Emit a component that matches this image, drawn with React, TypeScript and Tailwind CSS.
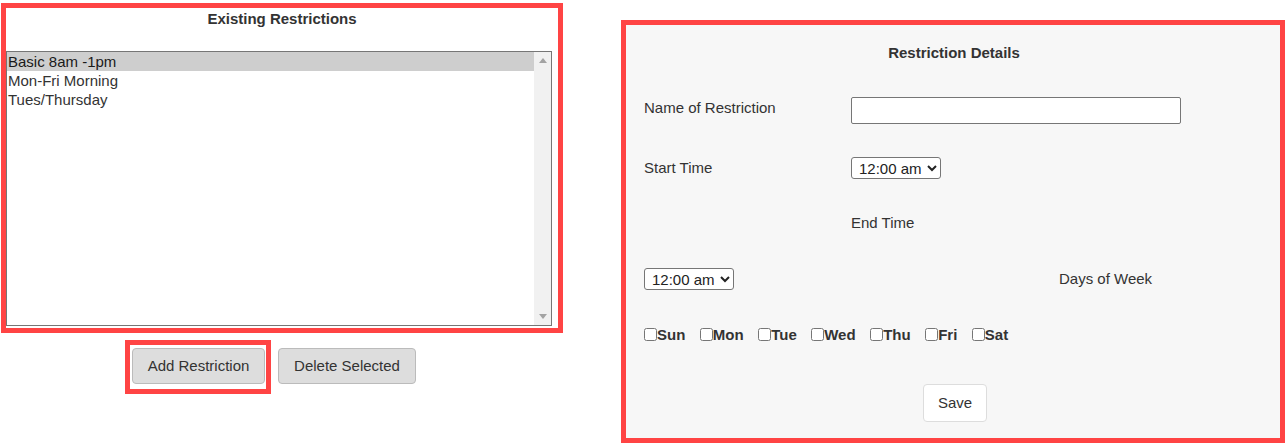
import React from "react";

// Existing restrictions shown in the list
const restrictions = [
  { id: 1, name: "Basic 8am -1pm", selected: true },
  { id: 2, name: "Mon-Fri Morning", selected: false },
  { id: 3, name: "Tues/Thursday", selected: false },
];

const days = ["Sun", "Mon", "Tue", "Wed", "Thu", "Fri", "Sat"];

const TimeSelect: React.FC = () => (
  <select
    defaultValue="12:00 am"
    className="w-[90px] h-[22px] pl-[3px] bg-white border border-[#767676] rounded-[3px] text-[15px] text-[#222]"
  >
    <option>12:00 am</option>
    <option>12:30 am</option>
    <option>1:00 am</option>
  </select>
);

const ScrollArrow: React.FC<{ down?: boolean }> = ({ down }) => (
  <div className="h-[17px] flex items-center justify-center">
    <svg width="8" height="5" viewBox="0 0 8 5">
      {down ? (
        <polygon points="0,0 8,0 4,5" fill="#a3a3a3" />
      ) : (
        <polygon points="0,5 8,5 4,0" fill="#a3a3a3" />
      )}
    </svg>
  </div>
);

const App: React.FC = () => {
  return (
    <div
      className="flex items-start pl-[1px] text-[#333] bg-white min-h-[443px]"
      style={{ fontFamily: '"Liberation Sans", Arial, sans-serif' }}
    >
      {/* Left column */}
      <div className="flex flex-col w-[562px] mt-[3px]">
        <div className="h-[330px] border-[5px] border-[#ff4444] flex flex-col">
          <h2 className="pt-[2px] text-center text-[15px] leading-[17px] font-bold text-[#333]">
            Existing Restrictions
          </h2>
          <div className="mt-[24px] w-[546px] h-[275px] border border-[#767676] flex">
            <ul className="flex-1 text-[15px] leading-[19px]">
              {restrictions.map((r) => (
                <li
                  key={r.id}
                  className={`pl-[1px] ${r.selected ? "bg-[#cecece] text-[#1a1a1a]" : "text-[#333]"}`}
                >
                  {r.name}
                </li>
              ))}
            </ul>
            <div className="w-[17px] bg-[#f1f1f1] flex flex-col justify-between">
              <ScrollArrow />
              <ScrollArrow down />
            </div>
          </div>
        </div>

        {/* Buttons */}
        <div className="flex items-start mt-[7px]">
          <div className="ml-[124px] border-[5px] border-[#ff4444] pt-[3px] pb-[5px] pl-[2px] pr-[1px]">
            <button className="w-[133px] h-[36px] bg-[#dddddd] border border-[#bbbbbb] rounded-[4px] text-[15px] text-[#333]">
              Add Restriction
            </button>
          </div>
          <button className="ml-[7px] mt-[8px] w-[138px] h-[36px] bg-[#dddddd] border border-[#bbbbbb] rounded-[4px] text-[15px] text-[#333]">
            Delete Selected
          </button>
        </div>
      </div>

      {/* Right panel */}
      <div className="ml-[58px] mt-[20px] w-[664px] h-[423px] border-[5px] border-[#ff4444] bg-[#f7f7f7] flex flex-col">
        <h2 className="pt-[19px] pl-[2px] text-center text-[15px] leading-[17px] font-bold text-[#333]">
          Restriction Details
        </h2>

        <div className="pl-[18px] text-[15px] leading-[17px]">
          <div className="mt-[36px] grid grid-cols-[207px_207px_1fr] items-start">
            <label className="mt-[2px]">Name of Restriction</label>
            <input
              type="text"
              className="col-span-2 w-[330px] h-[27px] bg-white border border-[#767676] rounded-[2px]"
            />
          </div>

          <div className="mt-[33px] grid grid-cols-[207px_207px_1fr] items-start">
            <label className="mt-[2px]">Start Time</label>
            <TimeSelect />
          </div>

          <div className="mt-[35px] grid grid-cols-[207px_207px_1fr]">
            <label className="col-start-2">End Time</label>
          </div>

          <div className="mt-[37px] grid grid-cols-[207px_207px_1fr] items-start">
            <TimeSelect />
            <label className="col-start-3 mt-[2px] ml-[1px]">Days of Week</label>
          </div>

          <div className="mt-[36px] flex gap-[14.5px] font-bold">
            {days.map((d) => (
              <label key={d} className="flex items-center">
                <input type="checkbox" className="w-[13px] h-[13px] m-0" />
                <span>{d}</span>
              </label>
            ))}
          </div>
        </div>

        <div className="mt-[41px] pl-[4px] flex justify-center">
          <button className="w-[64px] h-[38px] bg-white border border-[#dddddd] rounded-[4px] text-[15px] text-[#333]">
            Save
          </button>
        </div>
      </div>
    </div>
  );
};

export default App;
